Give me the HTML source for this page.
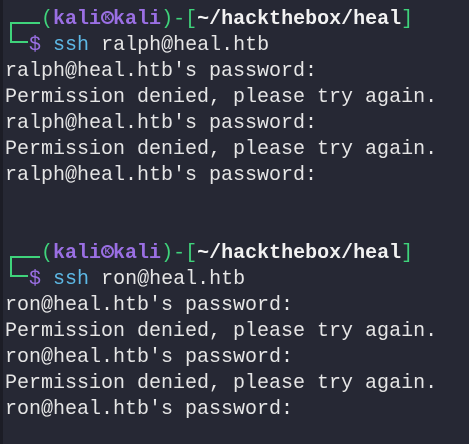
<!DOCTYPE html><html><head><style>
html,body{margin:0;padding:0;width:469px;height:444px;overflow:hidden;background:#262834;position:relative}
.bl{position:absolute;left:0;top:0;width:3px;height:444px;background:#1c1d26}
.l{position:absolute;left:5px;height:26px;font:20px/26px "Liberation Mono","DejaVu Sans Mono",monospace;color:#e6e6e6;white-space:pre}
.g{color:#3fd37b}.p{color:#9a6fe3;font-weight:bold}.w{color:#f2f2f2;font-weight:bold}.b{color:#5db9e6}.d{color:#9a6fe3}
.k{display:inline-block;width:12px;height:14px;position:relative;vertical-align:-1px}
.k i{position:absolute;left:0;top:0;width:13px;height:13px;border:2px solid #9a6fe3;border-radius:50%;box-sizing:border-box;font:bold 8px/9px "Liberation Sans",sans-serif;font-style:normal;color:#9a6fe3;text-align:center}
.c{position:absolute;background:#3fd37b}
</style></head><body><div class="bl"></div>
<div class="c" style="left:10px;top:22px;width:30px;height:2px"></div>
<div class="c" style="left:10px;top:22px;width:2px;height:21px"></div>
<div class="c" style="left:10px;top:41px;width:18px;height:2px"></div>
<div class="c" style="left:10px;top:256px;width:30px;height:2px"></div>
<div class="c" style="left:10px;top:256px;width:2px;height:21px"></div>
<div class="c" style="left:10px;top:275px;width:18px;height:2px"></div>
<div class="l" style="top:7px">   <span class="g">(</span><span class="p">kali<span class="k"><i>K</i></span>kali</span><span class="g">)-[</span><span class="w">~/hackthebox/heal</span><span class="g">]</span></div>
<div class="l" style="top:33px">  <span class="d">$</span> <span class="b">ssh</span> ralph@heal.htb</div>
<div class="l" style="top:59px">ralph@heal.htb's password:</div>
<div class="l" style="top:85px">Permission denied, please try again.</div>
<div class="l" style="top:111px">ralph@heal.htb's password:</div>
<div class="l" style="top:137px">Permission denied, please try again.</div>
<div class="l" style="top:163px">ralph@heal.htb's password:</div>
<div class="l" style="top:241px">   <span class="g">(</span><span class="p">kali<span class="k"><i>K</i></span>kali</span><span class="g">)-[</span><span class="w">~/hackthebox/heal</span><span class="g">]</span></div>
<div class="l" style="top:267px">  <span class="d">$</span> <span class="b">ssh</span> ron@heal.htb</div>
<div class="l" style="top:293px">ron@heal.htb's password:</div>
<div class="l" style="top:319px">Permission denied, please try again.</div>
<div class="l" style="top:345px">ron@heal.htb's password:</div>
<div class="l" style="top:371px">Permission denied, please try again.</div>
<div class="l" style="top:397px">ron@heal.htb's password:</div>
</body></html>
